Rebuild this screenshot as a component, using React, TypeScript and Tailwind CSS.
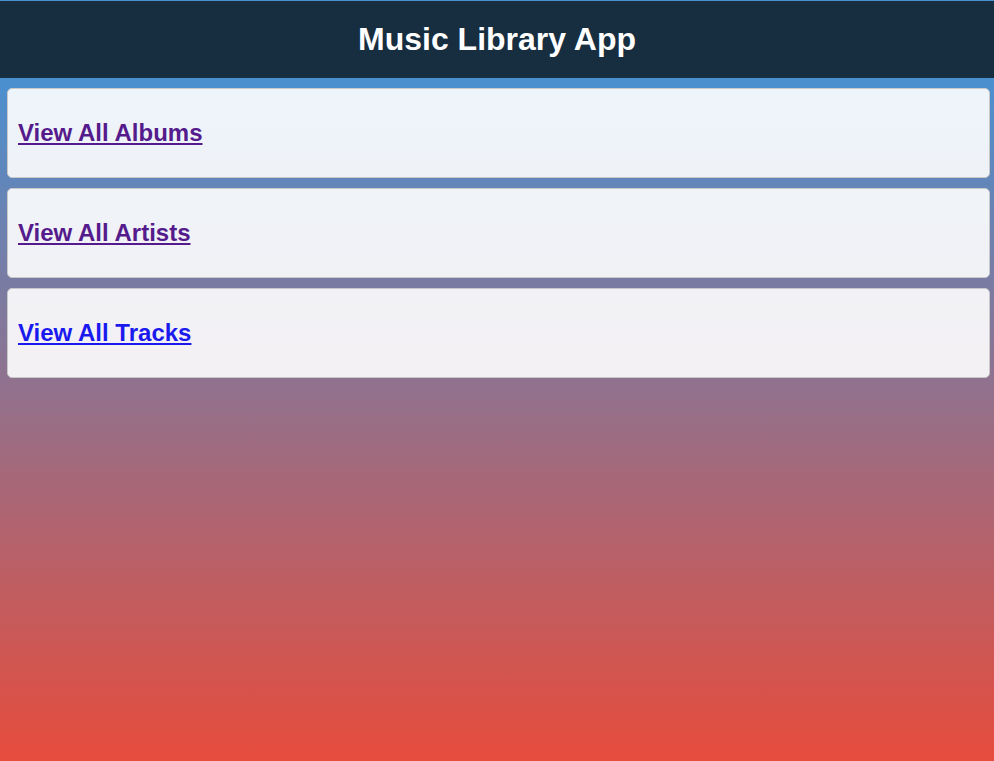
export default function App() {
  const links = [
    { label: "View All Albums", visited: true },
    { label: "View All Artists", visited: true },
    { label: "View All Tracks", visited: false },
  ];

  return (
    <div className="min-h-screen flex flex-col bg-[#4a90d0] font-['Liberation_Sans',Arial,sans-serif]">
      <header className="h-[78px] shrink-0 border-t border-[#4a90d0] bg-[#172d40] flex items-center justify-center">
        <h1 className="text-[32px] font-bold text-white leading-none -mt-[2px]">Music Library App</h1>
      </header>
      <main className="flex-1 flex flex-col gap-[10px] pt-[10px] pl-[7px] pr-[4px] bg-[linear-gradient(to_bottom,#4a90d0,#e74c3c)]">
        {links.map((l) => (
          <div key={l.label} className="bg-white/90 border border-[#c8c8c8] rounded-[5px] px-[10px] h-[90px] flex items-center">
            <a
              href="#"
              className={`text-[24px] font-bold underline leading-[1.15] ${l.visited ? "text-[#551a8b]" : "text-[#1a1aee]"}`}
            >
              {l.label}
            </a>
          </div>
        ))}
      </main>
    </div>
  );
}
